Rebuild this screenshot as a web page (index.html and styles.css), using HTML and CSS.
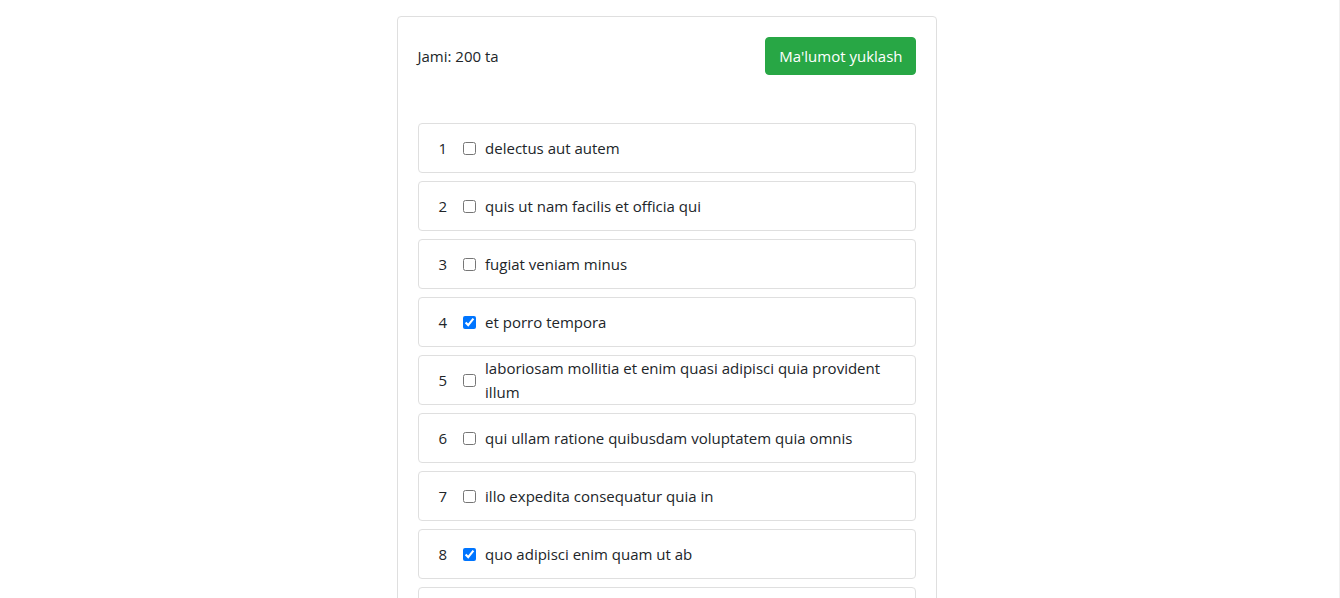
FILE: index.html
```html
<!DOCTYPE html>
<html lang="uz">
<head>
<meta charset="utf-8">
<title>Todos</title>
<link rel="stylesheet" href="styles.css">
</head>
<body>
<div class="page">
  <div class="card">
    <div class="card-head">
      <span class="total">Jami: 200 ta</span>
      <button class="btn-load" type="button">Ma'lumot yuklash</button>
    </div>
    <ul class="todo-list">
      <li class="todo"><span class="num">1</span><input type="checkbox"><span class="title">delectus aut autem</span></li>
      <li class="todo"><span class="num">2</span><input type="checkbox"><span class="title">quis ut nam facilis et officia qui</span></li>
      <li class="todo"><span class="num">3</span><input type="checkbox"><span class="title">fugiat veniam minus</span></li>
      <li class="todo"><span class="num">4</span><input type="checkbox" checked><span class="title">et porro tempora</span></li>
      <li class="todo"><span class="num">5</span><input type="checkbox"><span class="title">laboriosam mollitia et enim quasi adipisci quia provident illum</span></li>
      <li class="todo"><span class="num">6</span><input type="checkbox"><span class="title">qui ullam ratione quibusdam voluptatem quia omnis</span></li>
      <li class="todo"><span class="num">7</span><input type="checkbox"><span class="title">illo expedita consequatur quia in</span></li>
      <li class="todo"><span class="num">8</span><input type="checkbox" checked><span class="title">quo adipisci enim quam ut ab</span></li>
      <li class="todo"><span class="num">9</span><input type="checkbox"><span class="title">molestiae perspiciatis ipsa</span></li>
    </ul>
  </div>
</div>
</body>
</html>
```

FILE: styles.css
```css
html, body {
  margin: 0;
  padding: 0;
  background: #fff;
}

body {
  font-family: "Open Sans", "Noto Sans", sans-serif;
  font-size: 15px;
  line-height: 24px;
  color: #212529;
}

.page {
  display: flex;
  justify-content: center;
  padding: 16px 6px 0 0;
  min-height: 100vh;
  box-sizing: border-box;
  border-right: 1px solid #f0f0f0;
}

.card {
  width: 540px;
  box-sizing: border-box;
  border: 1px solid #dfdfdf;
  border-radius: 4px;
  padding: 20px;
  align-self: flex-start;
}

.card-head {
  display: flex;
  justify-content: space-between;
  align-items: center;
  margin-bottom: 48px;
}

.btn-load {
  font-family: inherit;
  font-size: 15px;
  line-height: 24px;
  color: #fff;
  background: #28a745;
  border: 1px solid #28a745;
  border-radius: 4px;
  padding: 6px 12px 6px 13px;
  cursor: pointer;
}

.todo-list {
  list-style: none;
  margin: 0;
  padding: 0;
  display: flex;
  flex-direction: column;
  gap: 8px;
}

.todo {
  display: flex;
  align-items: center;
  height: 50px;
  box-sizing: border-box;
  border: 1px solid #dfdfdf;
  border-radius: 4px;
  padding: 0 20px;
}

.num {
  margin-right: 16px;
}

.todo input {
  width: 13px;
  height: 13px;
  margin: 0 9px 0 0;
  flex: none;
}
```
